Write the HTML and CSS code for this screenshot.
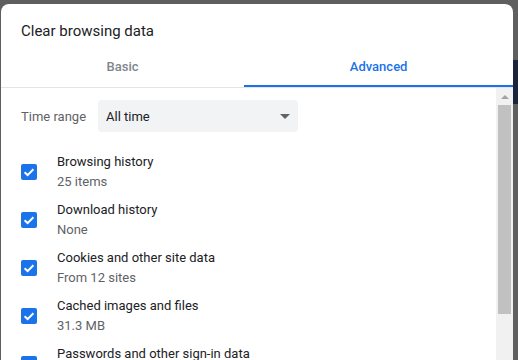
FILE: index.html
```html
<!DOCTYPE html>
<html lang="en">
<head>
    <meta charset="UTF-8">
    <meta name="viewport" content="width=device-width, initial-scale=1.0">
    <title>Clear browsing data</title>
    <link rel="stylesheet" href="styles.css">
</head>
<body>
    <div class="page-backdrop">
        <div class="backdrop-band"></div>
    </div>

    <div class="dialog">
        <div class="dialog-header">
            <h1 class="dialog-title">Clear browsing data</h1>
            <div class="tabs">
                <div class="tab">Basic</div>
                <div class="tab tab-active">Advanced</div>
            </div>
        </div>

        <div class="dialog-body">
            <div class="body-content">
                <div class="range-row">
                    <span class="range-label">Time range</span>
                    <div class="select-box">
                        <span>All time</span>
                        <span class="select-arrow"></span>
                    </div>
                </div>

                <ul class="item-list">
                    <li class="item">
                        <span class="checkbox"><svg viewBox="0 0 16 16" width="16" height="16"><path d="M3.6 8.3 L6.6 11.1 L12.4 5.2" /></svg></span>
                        <div class="item-text">
                            <div class="item-title">Browsing history</div>
                            <div class="item-sub">25 items</div>
                        </div>
                    </li>
                    <li class="item">
                        <span class="checkbox"><svg viewBox="0 0 16 16" width="16" height="16"><path d="M3.6 8.3 L6.6 11.1 L12.4 5.2" /></svg></span>
                        <div class="item-text">
                            <div class="item-title">Download history</div>
                            <div class="item-sub">None</div>
                        </div>
                    </li>
                    <li class="item">
                        <span class="checkbox"><svg viewBox="0 0 16 16" width="16" height="16"><path d="M3.6 8.3 L6.6 11.1 L12.4 5.2" /></svg></span>
                        <div class="item-text">
                            <div class="item-title">Cookies and other site data</div>
                            <div class="item-sub">From 12 sites</div>
                        </div>
                    </li>
                    <li class="item">
                        <span class="checkbox"><svg viewBox="0 0 16 16" width="16" height="16"><path d="M3.6 8.3 L6.6 11.1 L12.4 5.2" /></svg></span>
                        <div class="item-text">
                            <div class="item-title">Cached images and files</div>
                            <div class="item-sub">31.3 MB</div>
                        </div>
                    </li>
                    <li class="item">
                        <span class="checkbox"><svg viewBox="0 0 16 16" width="16" height="16"><path d="M3.6 8.3 L6.6 11.1 L12.4 5.2" /></svg></span>
                        <div class="item-text">
                            <div class="item-title">Passwords and other sign-in data</div>
                            <div class="item-sub">None</div>
                        </div>
                    </li>
                </ul>
            </div>

            <div class="scrollbar">
                <div class="scroll-up"><span class="scroll-arrow"></span></div>
                <div class="scroll-thumb"></div>
            </div>
        </div>
    </div>
</body>
</html>
```

FILE: styles.css
```css
/* Chrome "Clear browsing data" dialog */
body {
    background-color: #5f5f5f;
    margin: 0;
    height: 360px;
    overflow: hidden;
    font-family: Roboto, "Liberation Sans", Arial, sans-serif;
    position: relative;
}
.page-backdrop {
    position: absolute;
    inset: 0;
}
.backdrop-band {
    position: absolute;
    right: 0;
    top: 60px;
    width: 6px;
    height: 44px;
    background-color: #1b2438;
}
.dialog {
    position: relative;
    width: 512px;
    height: 420px;
    margin: 4px 0 0 1px;
    background-color: #fff;
    border-radius: 8px 8px 0 0;
    display: flex;
    flex-direction: column;
}
.dialog-header {
    border-bottom: 1px solid #e3e4e6;
}
.dialog-title {
    margin: 0;
    padding: 17px 20px 0;
    font-size: 15px;
    font-weight: 400;
    line-height: 20px;
    color: #202124;
}
.tabs {
    display: flex;
}
.tab {
    flex: 1 1 auto;
    text-align: center;
    padding: 16px 0 8px;
    font-size: 13px;
    font-weight: 500;
    line-height: 20px;
    color: #80868b;
    border-bottom: 2px solid transparent;
}
.tab-active {
    color: #1a73e8;
    border-bottom-color: #1a73e8;
}
.dialog-body {
    flex: 1;
    display: flex;
    overflow: hidden;
}
.body-content {
    flex: 1;
    padding: 12px 20px 0;
}
.range-row {
    display: flex;
    align-items: center;
    height: 32px;
}
.range-label {
    width: 77px;
    font-size: 13px;
    color: #5f6368;
}
.select-box {
    width: 200px;
    height: 32px;
    box-sizing: border-box;
    padding: 0 8px;
    border-radius: 4px;
    background-color: #f1f3f4;
    display: flex;
    align-items: center;
    justify-content: space-between;
    font-size: 13px;
    color: #202124;
}
.select-arrow {
    width: 0;
    height: 0;
    border-left: 5px solid transparent;
    border-right: 5px solid transparent;
    border-top: 5px solid #5f6368;
}
.item-list {
    list-style: none;
    margin: 16px 0 0;
    padding: 0;
}
.item {
    display: flex;
    align-items: center;
    gap: 20px;
    padding: 4px 0;
}
.checkbox {
    width: 16px;
    height: 16px;
    border-radius: 2px;
    background-color: #1a73e8;
    display: flex;
}
.checkbox path {
    fill: none;
    stroke: #fff;
    stroke-width: 2;
}
.item-text {
    font-size: 13px;
    line-height: 20px;
}
.item-title {
    color: #202124;
}
.item-sub {
    color: #5f6368;
}
.scrollbar {
    width: 17px;
    background-color: #f1f1f1;
    display: flex;
    flex-direction: column;
    align-items: center;
}
.scroll-up {
    height: 17px;
    width: 17px;
    display: flex;
    align-items: center;
    justify-content: center;
}
.scroll-arrow {
    width: 0;
    height: 0;
    border-left: 4px solid transparent;
    border-right: 4px solid transparent;
    border-bottom: 4px solid #a3a3a3;
}
.scroll-thumb {
    width: 13px;
    height: 209px;
    background-color: #c1c1c1;
}
```
